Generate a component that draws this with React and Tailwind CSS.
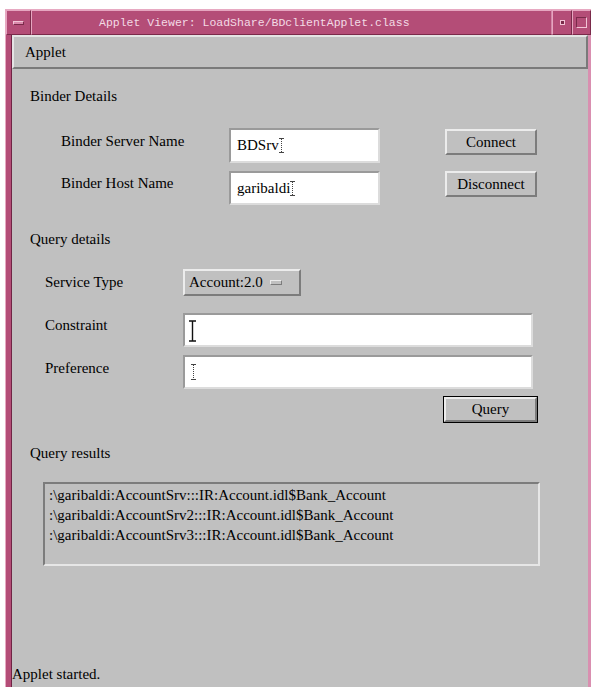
import React from "react";

const serif = { fontFamily: '"Liberation Serif", "DejaVu Serif", serif' };

// text caret drawn in the AWT text fields (dotted I-beam)
function Caret({ h = 16 }) {
  return (
    <svg width="5" height={h} viewBox={`0 0 5 ${h}`} className="inline-block align-middle">
      <line x1="0" y1="0.5" x2="5" y2="0.5" stroke="#444" strokeWidth="1" />
      <line x1="2.5" y1="1" x2="2.5" y2={h - 1} stroke="#444" strokeWidth="1" strokeDasharray="1 1" />
      <line x1="0" y1={h - 0.5} x2="5" y2={h - 0.5} stroke="#444" strokeWidth="1" />
    </svg>
  );
}

// mouse pointer I-beam
function IBeam() {
  return (
    <svg width="9" height="22" viewBox="0 0 9 22">
      <path d="M1 1h7M4.5 1v20M1 21h7" stroke="#111" strokeWidth="1.4" fill="none" />
    </svg>
  );
}

function TextField({ w, h, children }) {
  return (
    <div
      className={`${w} ${h} bg-white border-2 border-t-[#9a9a9a] border-l-[#9a9a9a] border-b-[#dcdcdc] border-r-[#dcdcdc] flex items-center pl-[6px] text-[15px] text-black`}
    >
      {children}
    </div>
  );
}

function Button({ w, h, label, focused }) {
  const inner = (
    <div
      className={`w-full h-full flex items-center justify-center bg-[#c0c0c0] border-2 border-t-[#ececec] border-l-[#ececec] border-b-[#7c7c7c] border-r-[#7c7c7c] text-[15px] text-black`}
    >
      {label}
    </div>
  );
  return (
    <div className={`${w} ${h} ${focused ? "border border-black" : ""}`}>{inner}</div>
  );
}

export default function App() {
  const results = [
    ":\\garibaldi:AccountSrv:::IR:Account.idl$Bank_Account",
    ":\\garibaldi:AccountSrv2:::IR:Account.idl$Bank_Account",
    ":\\garibaldi:AccountSrv3:::IR:Account.idl$Bank_Account",
  ];

  return (
    <div className="w-[591px] h-[687px] bg-white pt-[9px] pl-[5px] overflow-hidden" style={serif}>
      <div className="h-[678px] flex flex-col bg-[#b44d77] border-t border-l border-[#e7a9c2]">
        {/* title bar */}
        <div className="h-[25px] flex items-stretch">
          <div className="w-[25px] flex items-center justify-center border border-t-[#e6a6c0] border-l-[#e6a6c0] border-b-[#7a2a4a] border-r-[#7a2a4a]">
            <div className="w-[11px] h-[4px] bg-[#d987aa] border border-t-[#f2c4d6] border-l-[#f2c4d6] border-b-[#7a2a4a] border-r-[#7a2a4a]" />
          </div>
          <div
            className="flex-1 flex items-center pl-[67px] text-[11.5px] text-[#f3dbe5] border border-t-[#e6a6c0] border-l-[#e6a6c0] border-b-[#7a2a4a] border-r-[#d487a8]"
            style={{ fontFamily: '"Liberation Mono", "DejaVu Sans Mono", monospace' }}
          >
            Applet Viewer: LoadShare/BDclientApplet.class
          </div>
          <div className="w-[20px] flex items-center justify-center border border-t-[#e6a6c0] border-l-[#e6a6c0] border-b-[#7a2a4a] border-r-[#7a2a4a]">
            <div className="w-[3px] h-[3px] bg-[#7a2a4a] border border-[#f2c4d6] box-content" />
          </div>
          <div className="w-[19px] flex items-center justify-center border border-t-[#e6a6c0] border-l-[#e6a6c0] border-b-[#7a2a4a] border-r-[#7a2a4a]">
            <div className="w-[11px] h-[11px] border border-t-[#7a2a4a] border-l-[#7a2a4a] border-b-[#f2c4d6] border-r-[#f2c4d6]" />
          </div>
        </div>

        <div className="flex-1 flex">
          {/* left frame edge */}
          <div className="w-[6px] bg-[#b44d77] border-r border-[#6f2444]" />

          <div className="flex-1 flex flex-col bg-[#c0c0c0]">
            {/* menu bar */}
            <div className="h-[34px] flex items-center pl-[11px] text-[15px] text-black border-2 border-t-[#e4e4e4] border-l-[#e4e4e4] border-b-[#7a7a7a] border-r-[#7a7a7a]">
              Applet
            </div>

            <div className="flex-1 flex flex-col text-[15px] text-black leading-[17px]">
              <div className="mt-[19px] pl-[18px]">Binder Details</div>

              {/* binder server name */}
              <div className="mt-[23px] flex items-start pl-[49px]">
                <div className="w-[168px] pt-[5px]">Binder Server Name</div>
                <TextField w="w-[151px]" h="h-[35px]">
                  BDSrv
                  <Caret h={15} />
                </TextField>
                <div className="ml-[65px] mt-[1px]">
                  <Button w="w-[92px]" h="h-[26px]" label="Connect" />
                </div>
              </div>

              {/* binder host name */}
              <div className="mt-[8px] flex items-start pl-[49px]">
                <div className="w-[168px] pt-[4px]">Binder Host Name</div>
                <TextField w="w-[151px]" h="h-[34px]">
                  garibaldi
                  <Caret h={15} />
                </TextField>
                <div className="ml-[65px]">
                  <Button w="w-[92px]" h="h-[26px]" label="Disconnect" />
                </div>
              </div>

              <div className="mt-[26px] pl-[18px]">Query details</div>

              {/* service type */}
              <div className="mt-[21px] flex items-center pl-[33px]">
                <div className="w-[138px]">Service Type</div>
                <div className="w-[118px] h-[27px] flex items-center pl-[4px] bg-[#c0c0c0] border-2 border-t-[#ececec] border-l-[#ececec] border-b-[#7c7c7c] border-r-[#7c7c7c]">
                  Account:2.0
                  <div className="ml-[7px] w-[12px] h-[5px] border border-t-[#ececec] border-l-[#ececec] border-b-[#7c7c7c] border-r-[#7c7c7c]" />
                </div>
              </div>

              {/* constraint */}
              <div className="mt-[17px] flex items-start pl-[33px]">
                <div className="w-[138px] pt-[4px]">Constraint</div>
                <TextField w="w-[350px]" h="h-[34px]">
                  <div className="-ml-[3px] mt-[2px]">
                    <IBeam />
                  </div>
                </TextField>
              </div>

              {/* preference */}
              <div className="mt-[8px] flex items-start pl-[33px]">
                <div className="w-[138px] pt-[5px]">Preference</div>
                <TextField w="w-[350px]" h="h-[34px]">
                  <Caret h={16} />
                </TextField>
              </div>

              <div className="mt-[7px] pl-[431px]">
                <Button w="w-[95px]" h="h-[27px]" label="Query" focused />
              </div>

              <div className="mt-[22px] pl-[18px]">Query results</div>

              {/* result list */}
              <div className="mt-[20px] ml-[31px] w-[497px] h-[84px] pt-[1px] pl-[4px] border-2 border-t-[#7c7c7c] border-l-[#7c7c7c] border-b-[#e6e6e6] border-r-[#e6e6e6] leading-[20px]">
                {results.map((r, i) => (
                  <div key={i}>{r}</div>
                ))}
              </div>

              <div className="flex-1" />
              <div className="pb-[4px]">Applet started.</div>
            </div>
          </div>

          {/* right frame edge */}
          <div className="w-[3px] bg-[#d98fb0]" />
        </div>
      </div>
    </div>
  );
}
